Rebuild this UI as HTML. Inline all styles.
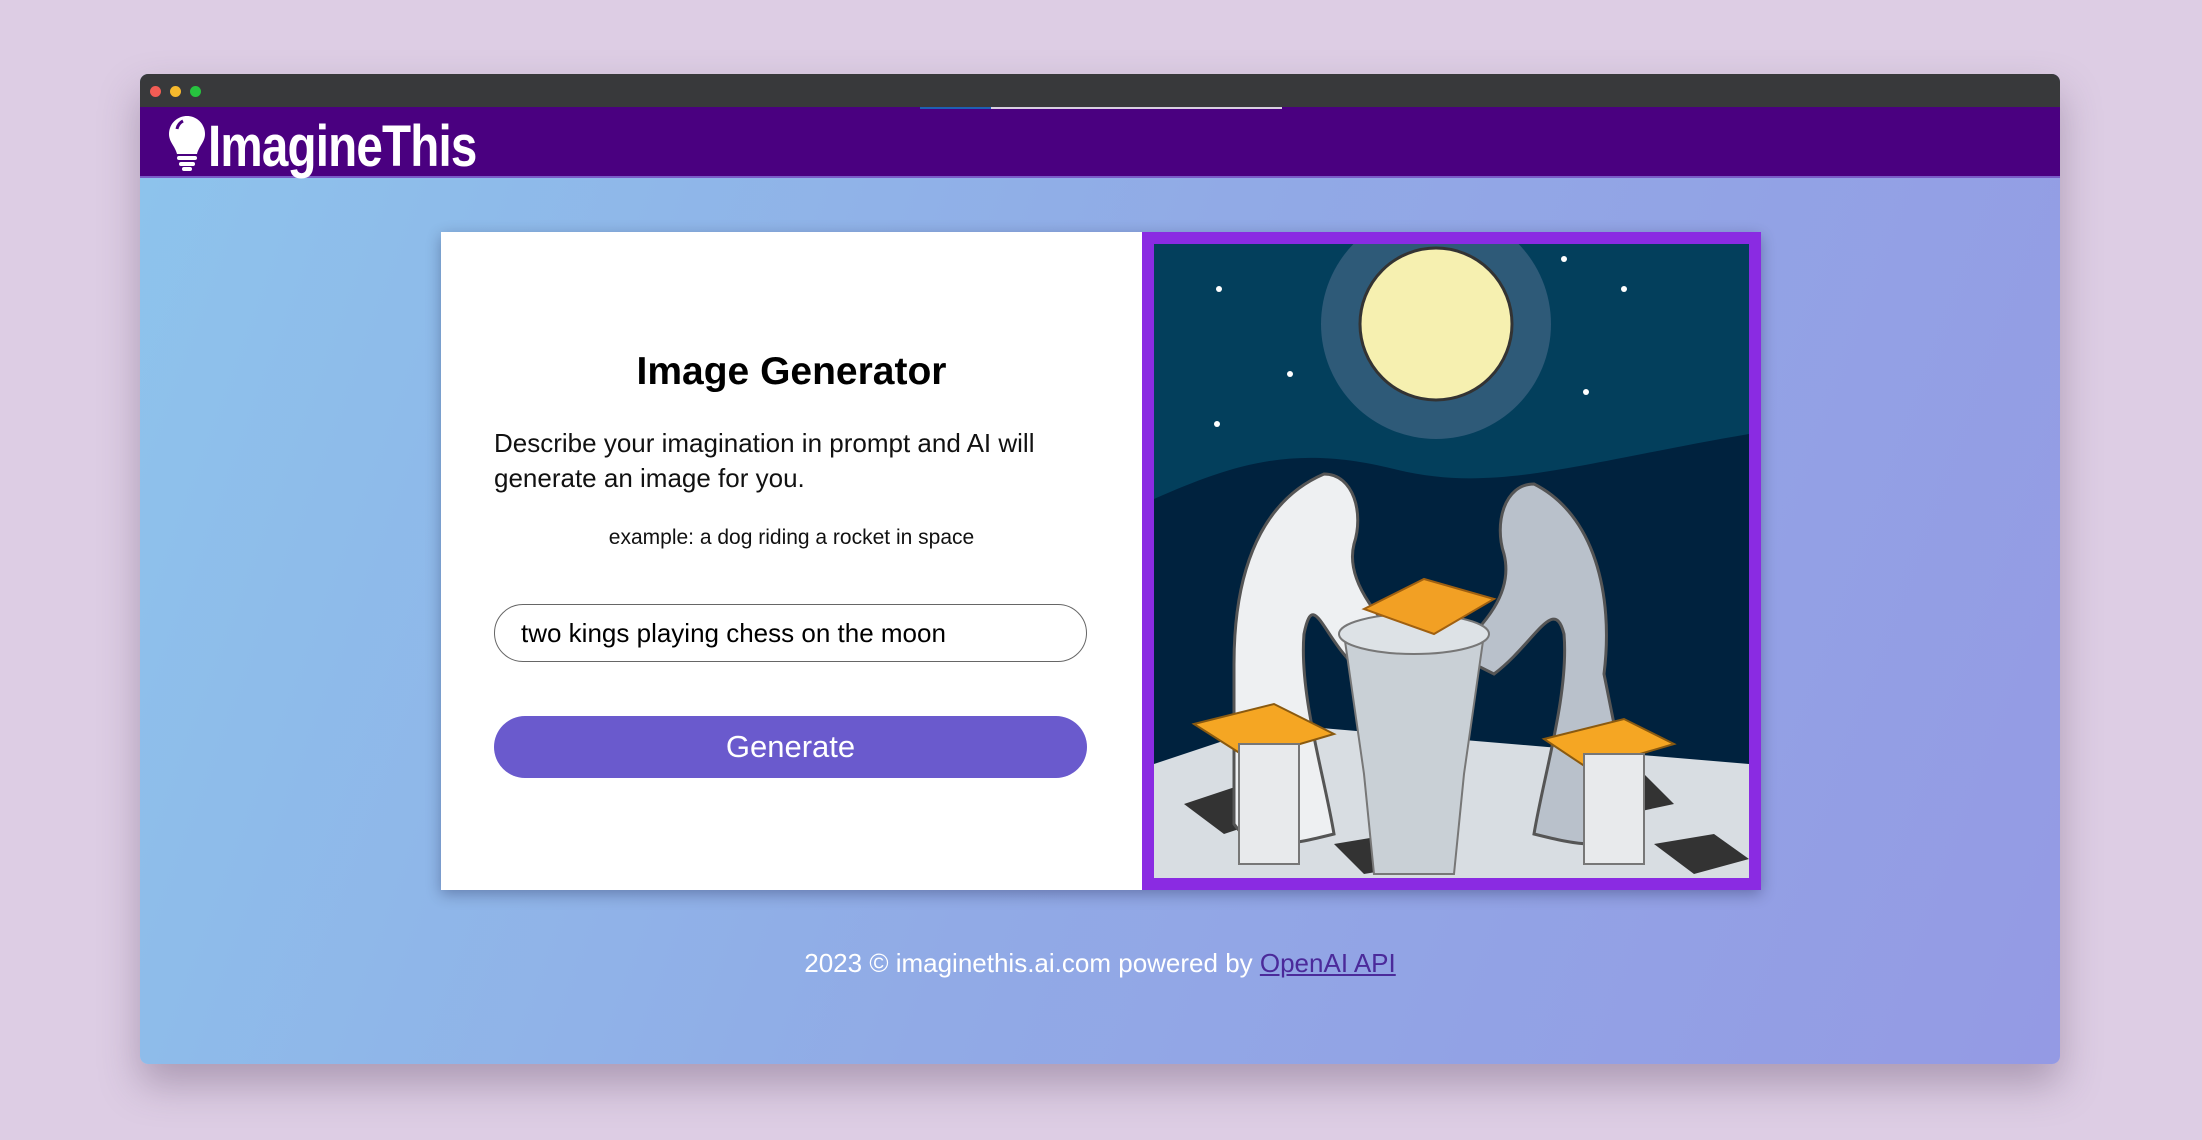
<!DOCTYPE html>
<html><head><meta charset="utf-8"><style>
*{margin:0;padding:0;box-sizing:border-box}
body{width:2202px;height:1140px;background:#ddcde4;position:relative;overflow:hidden;font-family:"Liberation Sans",sans-serif}
.win{position:absolute;left:140px;top:74px;width:1920px;height:990px;border-radius:8px;overflow:hidden;box-shadow:0 20px 40px rgba(80,60,90,.35);background:linear-gradient(110deg,#8dc4ec 0%,#91aae6 50%,#949ae4 100%)}
.tb{height:33px;background:#38393b;position:relative}
.dot{position:absolute;top:12px;width:11px;height:11px;border-radius:50%}
.hd{position:absolute;top:33px;left:0;right:0;height:71px;background:#4a0080;border-bottom:2px solid #7a5cc8}
.tab{position:absolute;top:33px;left:780px;width:362px;height:2px;background:#d8d0e0}
.tab i{position:absolute;left:0;top:0;width:71px;height:2px;background:#1e5fb4}
.logo{position:absolute;left:68px;top:39px;color:#fff;font-weight:bold;font-size:58px;transform:scaleX(.82);transform-origin:left top;letter-spacing:-1px}
.card{position:absolute;left:301px;top:158px;width:1320px;height:658px;box-shadow:0 4px 14px rgba(0,0,40,.3);display:flex}
.l{width:701px;background:#fff;text-align:center;position:relative}
.r{width:619px;background:#8a2be2;padding:12px 12px 12px 12px}
h1{position:absolute;top:118px;left:0;right:0;font-size:39px;font-weight:bold}
.d{position:absolute;left:53px;top:194px;width:620px;text-align:left;font-size:26px;line-height:35px;color:#111}
.ex{position:absolute;left:0;right:0;top:294px;font-size:21px;color:#111}
.in{position:absolute;left:53px;top:372px;width:593px;height:58px;border:1.5px solid #666;border-radius:29px;text-align:left;padding-left:26px;font-size:26px;line-height:56px}
.bt{position:absolute;left:53px;top:484px;width:593px;height:62px;border-radius:31px;background:#6a5acd;color:#fff;font-size:31px;line-height:62px}
.ft{position:absolute;left:0;right:0;top:874px;text-align:center;color:#fff;font-size:26px}
.ft a{color:#4b2a9a;text-decoration:underline}
</style></head><body>
<div class="win">
<div class="tb"><span class="dot" style="left:10px;background:#f25c55"></span><span class="dot" style="left:30px;background:#f6b92d"></span><span class="dot" style="left:50px;background:#27c33f"></span></div>
<div class="hd"></div><div class="tab"><i></i></div>
<svg style="position:absolute;left:28px;top:41px" width="38" height="56" viewBox="0 0 38 56"><path d="M19 1C9 1 1 9 1 19c0 8 6 12 8 20h20c2-8 8-12 8-20C37 9 29 1 19 1z" fill="#fff"/><path d="M9 14c1-5 4-7 6-8" stroke="#4a0080" stroke-width="3" fill="none"/><rect x="9" y="41" width="20" height="4" rx="2" fill="#fff"/><rect x="11" y="47" width="16" height="4" rx="2" fill="#fff"/><rect x="14" y="52" width="10" height="4" rx="2" fill="#fff"/></svg>
<div class="logo">ImagineThis</div>
<div class="card">
<div class="l"><h1>Image Generator</h1>
<div class="d">Describe your imagination in prompt and AI will generate an image for you.</div>
<div class="ex">example: a dog riding a rocket in space</div>
<div class="in">two kings playing chess on the moon</div>
<div class="bt">Generate</div></div>
<div class="r"><svg width="595" height="634" viewBox="0 0 595 634">
<rect width="595" height="634" fill="#033f5c"/>
<circle cx="282" cy="80" r="115" fill="#2e5a78"/>
<circle cx="282" cy="80" r="76" fill="#f6f0b0" stroke="#333" stroke-width="3"/>
<g fill="#fff"><circle cx="65" cy="45" r="3"/><circle cx="136" cy="130" r="3"/><circle cx="410" cy="15" r="3"/><circle cx="470" cy="45" r="3"/><circle cx="432" cy="148" r="3"/><circle cx="63" cy="180" r="3"/><circle cx="18" cy="360" r="3"/></g>
<path d="M0 255C80 220 140 200 240 225S420 220 595 190V634H0z" fill="#00223e"/>
<path d="M0 520L120 480 595 520V634H0z" fill="#d8dde2"/>
<path d="M30 560l60-20 40 30-60 20zM420 540l70-10 30 30-70 15zM180 600l60-10 30 30-60 10zM500 600l60-10 35 25-55 15z" fill="#333"/>
<path d="M80 420c0-80 20-160 90-190 30 0 40 40 30 70-10 40 30 80 60 110l-50 20c-40-30-50-90-60-40-5 60 20 140 30 200-40 10-80 20-100-10z" fill="#eef0f2" stroke="#555" stroke-width="3"/>
<path d="M450 430c10-80-10-160-70-190-30 0-40 40-30 70 10 40-20 70-50 100l40 20c40-30 60-80 70-40 5 60-20 140-30 200 40 10 80 20 100-10z" fill="#b9c1cb" stroke="#555" stroke-width="3"/>
<path d="M190 390h140l-20 140-10 100h-80l-10-100z" fill="#c9d0d6" stroke="#777" stroke-width="2"/>
<ellipse cx="260" cy="390" rx="75" ry="20" fill="#dde2e6" stroke="#777" stroke-width="2"/>
<path d="M210 365l60-30 70 20-60 35z" fill="#f2a024" stroke="#a06010" stroke-width="2"/>
<path d="M40 480l80-20 60 30-85 25z" fill="#f5a623" stroke="#8a5a10" stroke-width="2"/>
<path d="M390 495l80-20 50 25-85 25z" fill="#f5a623" stroke="#8a5a10" stroke-width="2"/>
<path d="M85 500h60v120h-60zM430 510h60v110h-60z" fill="#e8eaec" stroke="#777" stroke-width="2"/>
</svg></div>
</div>
<div class="ft">2023 © imaginethis.ai.com powered by <a>OpenAI API</a></div>
</div>
</body></html>
